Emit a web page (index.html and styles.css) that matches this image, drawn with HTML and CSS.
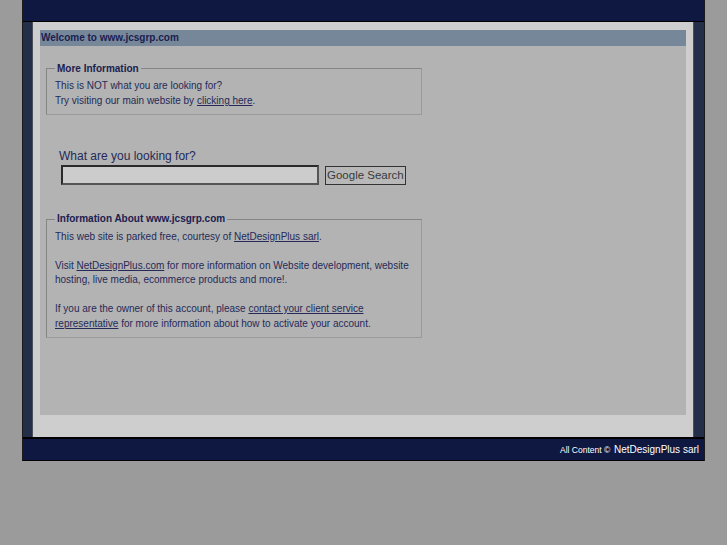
FILE: index.html
```html
<!DOCTYPE html>
<html>
<head>
    <meta charset="UTF-8"/>
    <title>Welcome to www.jcsgrp.com</title>
    <link rel="stylesheet" href="styles.css">
</head>
<body>
<div class="page">
    <!-- Top bar -->
    <div class="topbar"></div>
    <div class="middle">
        <div class="side side-left"></div>
        <div class="panel">
            <div class="content">
                <div class="title-bar">Welcome to www.jcsgrp.com</div>
                <!-- More information box -->
                <fieldset class="box box-more">
                    <legend>More Information</legend>
                    This is NOT what you are looking for?<br>
                    Try visiting our main website by <a href="#">clicking here</a>.
                </fieldset>
                <!-- Search -->
                <form class="search">
                    <div class="search-label">What are you looking for?</div>
                    <div class="search-row">
                        <input type="text" class="search-input">
                        <button type="button" class="search-button">Google Search</button>
                    </div>
                </form>
                <!-- About box -->
                <fieldset class="box box-about">
                    <legend>Information About www.jcsgrp.com</legend>
                    This web site is parked free, courtesy of <a href="#">NetDesignPlus sarl</a>.<br><br>
                    Visit <a href="#">NetDesignPlus.com</a> for more information on Website development, website hosting, live media, ecommerce products and more!.<br><br>
                    If you are the owner of this account, please <a href="#">contact your client service representative</a> for more information about how to activate your account.
                </fieldset>
            </div>
        </div>
        <div class="side side-right"></div>
    </div>
    <div class="footer">
        <span class="small">All Content &copy;</span> NetDesignPlus sarl
    </div>
</div>
</body>
</html>
```

FILE: styles.css
```css
body {
margin: 0;
background-color: #9b9b9b;
font-family: "Liberation Sans", Arial, sans-serif;
color: #1e2452;
}
.page {
width: 681px;
margin: 0 auto;
border-left: 1px solid #1a1a1a;
border-right: 1px solid #1a1a1a;
}
.topbar {
height: 21px;
background-color: #0f1840;
border-bottom: 1px solid #000;
}
.middle {
display: flex;
}
.side {
width: 9px;
background-color: #232e48;
}
.side-left {
border-right: 1px solid #4a4f5a;
}
.side-right {
width: 10px;
border-left: 1px solid #4a4f5a;
}
.panel {
flex: 1;
background-color: #cecece;
padding: 8px 7px 22px 7px;
}
.content {
background-color: #b3b3b3;
height: 385px;
}
.title-bar {
background-color: #77879a;
height: 16px;
line-height: 16px;
font-size: 10px;
font-weight: bold;
padding-left: 1px;
color: #1a2050;
}
.box {
width: 356px;
margin: 0 0 0 6px;
padding: 2px 10px 6px 8px;
border: 1px solid #858585;
border-right-color: #9a9a9a;
border-bottom-color: #9a9a9a;
font-size: 10px;
line-height: 15px;
color: #252a58;
}
.box legend {
font-weight: bold;
padding: 0 2px;
margin-left: 0;
color: #1a2050;
}
.box a {
color: #252a58;
}
.box-more {
margin-top: 15px;
}
.box-about {
margin-top: 27px;
line-height: 14.5px;
padding-top: 3px;
padding-bottom: 6px;
}
.search {
margin: 34px 0 0 19px;
}
.search-label {
font-size: 12px;
color: #252a58;
line-height: 14px;
margin-bottom: 2px;
}
.search-row {
display: flex;
align-items: center;
gap: 6px;
margin-left: 2px;
}
.search-input {
width: 250px;
height: 14px;
margin: 0;
background-color: #cccccc;
border: 2px solid #2a2a2a;
border-right-color: #555;
border-bottom-color: #555;
}
.search-button {
height: 19px;
margin: 0;
padding: 0 1px;
background-color: #b8b8b8;
border: 1px solid #333;
font-family: "Liberation Sans", Arial, sans-serif;
font-size: 11.5px;
color: #3a3a3a;
}
.footer {
height: 21px;
background-color: #0f1840;
border-top: 2px solid #000;
border-bottom: 1px solid #000;
text-align: right;
padding-right: 5px;
line-height: 21px;
font-family: "Liberation Sans", Arial, sans-serif;
font-size: 10px;
color: #fff;
}
.footer .small {
font-size: 8.5px;
margin-right: 1px;
}
```
